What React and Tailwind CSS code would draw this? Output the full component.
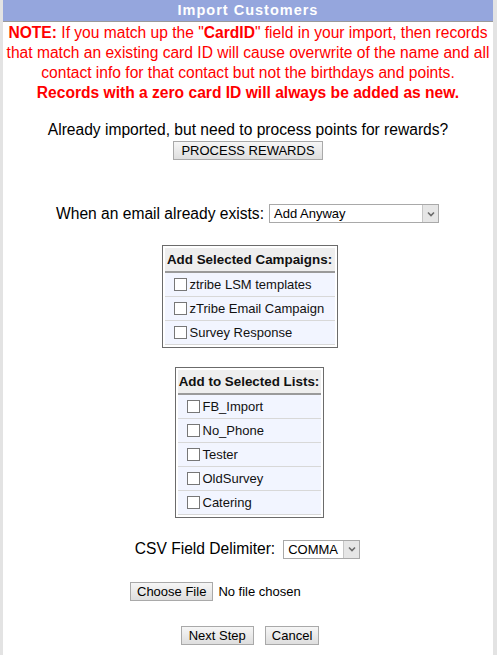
const CAMPAIGNS = ['ztribe LSM templates', 'zTribe Email Campaign', 'Survey Response']
const LISTS = ['FB_Import', 'No_Phone', 'Tester', 'OldSurvey', 'Catering']

function Btn({ children, className = '' }) {
  return (
    <button
      type="button"
      className={`h-[19px] px-[6px] border border-[#a9a9a9] bg-gradient-to-b from-[#f6f6f6] to-[#dedede] text-[13px] leading-none text-black whitespace-nowrap ${className}`}
    >
      {children}
    </button>
  )
}

function FakeSelect({ value, width }) {
  return (
    <div className={`inline-flex h-[19px] border border-[#a9a9a9] bg-white items-stretch ${width}`}>
      <span className="flex-1 pl-[4px] text-[13px] leading-[17px] text-black text-left">{value}</span>
      <span className="w-[16px] bg-[#e6e6e6] border-l border-[#c6c6c6] flex items-center justify-center">
        <svg width="8" height="6" viewBox="0 0 8 6">
          <path d="M1 1.5 L4 4.5 L7 1.5" fill="none" stroke="#6b6b6b" strokeWidth="1.6" />
        </svg>
      </span>
    </div>
  )
}

function CheckTable({ title, items, width }) {
  return (
    <div className={`border border-[#6b6b6b] p-[2px] bg-white ${width}`}>
      <div className="bg-[#eeeeee] border-b-2 border-[#9a9a9a] h-[25px] flex items-center justify-center font-bold text-[13.4px] text-[#111] whitespace-nowrap">
        {title}
      </div>
      {items.map(item => (
        <div key={item} className="h-[24px] bg-[#f2f5ff] border-b border-[#d8d8d8] flex items-center pl-[9px] text-[13px] text-[#111] whitespace-nowrap">
          <span className="w-[13px] h-[13px] border border-[#777] bg-white mr-[3px] shrink-0" />
          {item}
        </div>
      ))}
    </div>
  )
}

export default function App() {
  return (
    <div className="w-[497px] h-[655px] bg-white border-l-[3px] border-r-[4px] border-[#e3e3e3] overflow-hidden" style={{ fontFamily: '"Liberation Sans", Arial, sans-serif' }}>
      <div className="h-[22px] bg-[#95a6dd] border-b border-[#9a9a9a] flex items-center justify-center text-white font-bold text-[14.5px] tracking-[1px]">
        Import Customers
      </div>

      <div className="text-center text-[15.6px] leading-[20px] text-[#ff0000] pt-[1px]">
        <p>
          <b>NOTE:</b> If you match up the "<b>CardID</b>" field in your import, then records that match an existing card ID will cause overwrite of the name and all contact info for that contact but not the birthdays and points.
        </p>
        <p className="font-bold leading-[19px]">Records with a zero card ID will always be added as new.</p>
      </div>

      <div className="flex flex-col items-center mt-[18px]">
        <div className="text-[15.6px] leading-[20px] text-black">Already imported, but need to process points for rewards?</div>
        <Btn className="mt-[1px] px-[7px]">PROCESS REWARDS</Btn>
      </div>

      <div className="flex items-center justify-center gap-[5px] mt-[42px] ml-[-1px]">
        <span className="text-[15.6px] text-black">When an email already exists:</span>
        <FakeSelect value="Add Anyway" width="w-[170px]" />
      </div>

      <div className="flex justify-center mt-[20px] ml-[3px]">
        <CheckTable title="Add Selected Campaigns:" items={CAMPAIGNS} width="w-[176px]" />
      </div>

      <div className="flex justify-center mt-[19px] ml-[2px]">
        <CheckTable title="Add to Selected Lists:" items={LISTS} width="w-[149px]" />
      </div>

      <div className="flex items-center justify-center gap-[8px] mt-[19px] ml-[-1px]">
        <span className="text-[15.6px] text-black">CSV Field Delimiter:</span>
        <FakeSelect value="COMMA" width="w-[77px]" />
      </div>

      <div className="flex items-center mt-[21px] ml-[127px] gap-[5px]">
        <Btn className="px-[6px]">Choose File</Btn>
        <span className="text-[13px] text-black">No file chosen</span>
      </div>

      <div className="flex justify-center gap-[11px] mt-[25px] ml-[4px]">
        <Btn className="px-[7px]">Next Step</Btn>
        <Btn className="px-[5px]">Cancel</Btn>
      </div>
    </div>
  )
}
